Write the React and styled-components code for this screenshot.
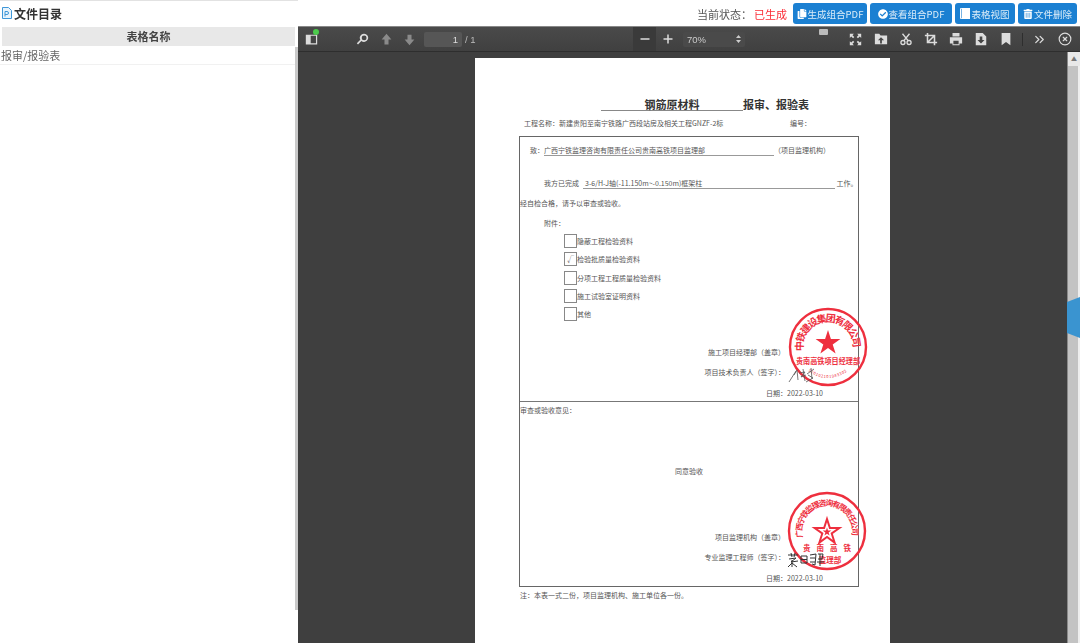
import React from "react";
import styled, { createGlobalStyle } from "styled-components";
import { FaCheckCircle, FaCopy, FaTrashAlt } from "react-icons/fa";
import { ChevronsRight, CircleX } from "lucide-react";

const CJK = `"Noto Sans CJK SC", "Liberation Sans", sans-serif`;

const Global = createGlobalStyle`
  html, body { margin: 0; padding: 0; height: 100%; background: #fff; overflow: hidden; }
  body { font-family: ${CJK}; }
  #root { height: 100%; }
`;

const Page = styled.div`
  display: flex;
  width: 1080px;
  height: 643px;
  overflow: hidden;
  filter: blur(0.3px);
`;

const Sidebar = styled.aside`
  width: 298px;
  flex: none;
  display: flex;
  flex-direction: column;
  border-top: 1px solid #e2e2e2;
  box-sizing: border-box;
`;

const SidebarTitle = styled.div`
  height: 26px;
  flex: none;
  display: flex;
  align-items: center;
  gap: 2px;
  padding: 0 0 2px 2px;
  box-sizing: border-box;
  font-size: 12px;
  font-weight: 700;
  color: #333;
`;

const SidebarBody = styled.div`
  flex: 1;
  display: flex;
`;

const TableWrap = styled.div`
  width: 293px;
  margin-left: 2px;
  flex: none;
`;

const TableHead = styled.div`
  height: 19px;
  background: #e8e8e8;
  text-align: center;
  font-size: 11px;
  line-height: 19px;
  font-weight: 700;
  color: #444;
`;

const TableRow = styled.div`
  height: 19px;
  margin-left: -2px;
  line-height: 19px;
  font-size: 11px;
  color: #666;
  padding-left: 1px;
  border-bottom: 1px solid #f1f1f1;
  box-sizing: border-box;
`;

const SideThumb = styled.div`
  width: 3px;
  height: 563px;
  margin-top: 20px;
  background: #c9c9c9;
`;

const Main = styled.main`
  flex: 1;
  min-width: 0;
  display: flex;
  flex-direction: column;
`;

const TopBar = styled.div`
  height: 26px;
  flex: none;
  display: flex;
  align-items: center;
  justify-content: flex-end;
  padding: 1px 3px 0 0;
  box-sizing: border-box;
`;

const StatusLabel = styled.span`
  font-size: 11px;
  color: #555;
  white-space: nowrap;
`;

const StatusValue = styled.span`
  font-size: 11px;
  color: #fb2c36;
  margin: 0 6px 0 2px;
  white-space: nowrap;
`;

const ActionButton = styled.button`
  height: 21px;
  width: ${(p) => p.$w}px;
  margin-left: ${(p) => (p.$first ? 0 : 3)}px;
  padding: 0;
  border: 0;
  border-radius: 3px;
  background: #1b80d2;
  color: #dcecf8;
  font-family: ${CJK};
  font-size: 9.5px;
  display: flex;
  align-items: center;
  justify-content: center;
  gap: 1px;
  white-space: nowrap;
  svg { color: #fff; }
`;

const Viewer = styled.section`
  flex: 1;
  min-height: 0;
  display: flex;
  flex-direction: column;
  background: #3f3f3f;
`;

const Toolbar = styled.div`
  height: 26px;
  flex: none;
  display: flex;
  align-items: center;
  box-sizing: border-box;
  background: linear-gradient(#4a4a4a, #404040);
  border-top: 1px solid #888;
  border-bottom: 1px solid #2e2e2e;
  color: #d9d9d9;
`;

const Tool = styled.div`
  position: relative;
  width: ${(p) => p.$w || 25}px;
  height: 24px;
  margin-left: ${(p) => p.$ml || 0}px;
  flex: none;
  display: flex;
  align-items: center;
  justify-content: center;
  color: ${(p) => p.$c || "#dcdcdc"};
  background: ${(p) => p.$bg || "transparent"};
`;

const TinyTool = styled(Tool)`
  align-items: flex-start;
  padding-top: 2px;
  box-sizing: border-box;
`;

const Dot = styled.span`
  position: absolute;
  width: 6px;
  height: 6px;
  top: 2px;
  right: 0;
  border-radius: 50%;
  background: #4ccb4c;
`;

const PageInput = styled.div`
  width: 38px;
  height: 15px;
  margin-left: 3px;
  flex: none;
  background: #565656;
  border-radius: 2px;
  font-size: 9.5px;
  line-height: 15px;
  text-align: right;
  padding-right: 4px;
  box-sizing: border-box;
  font-family: "Liberation Sans", sans-serif;
  color: #ddd;
`;

const PageCount = styled.span`
  margin-left: 3px;
  width: 12px;
  flex: none;
  font-size: 9.5px;
  font-family: "Liberation Sans", sans-serif;
  color: #bbb;
  white-space: nowrap;
`;

const ZoomSelect = styled.div`
  width: 62px;
  height: 15px;
  margin-left: 3px;
  flex: none;
  background: #4a4a4a;
  border-radius: 2px;
  display: flex;
  align-items: center;
  justify-content: space-between;
  padding: 0 4px;
  box-sizing: border-box;
  font-size: 9.5px;
  font-family: "Liberation Sans", sans-serif;
  color: #ccc;
`;

const Divider = styled.span`
  width: 1px;
  height: 13px;
  margin-left: 4px;
  flex: none;
  background: #2e2e2e;
`;

const ViewerBody = styled.div`
  position: relative;
  flex: 1;
  min-height: 0;
  display: flex;
`;

const PageArea = styled.div`
  flex: 1;
  min-width: 0;
  display: flex;
  justify-content: center;
  overflow: hidden;
  padding-top: 6px;
`;

const Paper = styled.div`
  width: 415px;
  height: 620px;
  flex: none;
  background: #fff;
  padding-top: 39px;
  box-sizing: border-box;
  color: #555;
  font-size: 7px;
`;

const Title = styled.div`
  display: flex;
  height: 14px;
  margin-left: 126px;
  font-size: 11px;
  font-weight: 700;
  line-height: 14px;
  color: #333;
`;

const TitleBlank = styled.span`
  width: 142px;
  text-align: center;
  border-bottom: 1px solid #888;
  box-sizing: border-box;
`;

const ProjectLine = styled.div`
  display: flex;
  justify-content: space-between;
  height: 10px;
  line-height: 10px;
  margin: 7px 79px 0 49px;
`;

const FormBox = styled.div`
  position: relative;
  width: 340px;
  height: 451px;
  margin: 8px 0 0 44px;
  box-sizing: border-box;
  border: 1px solid #666;
`;

const TopSection = styled.div`
  height: 265px;
  border-bottom: 1px solid #777;
  box-sizing: border-box;
  overflow: hidden;
`;

const Line = styled.div`
  display: flex;
  height: 10px;
  line-height: 10px;
  white-space: nowrap;
  margin-top: ${(p) => p.$mt || 0}px;
  padding-left: ${(p) => p.$pl || 0}px;
  justify-content: ${(p) => (p.$pr !== undefined ? "flex-end" : p.$center ? "center" : "flex-start")};
  padding-right: ${(p) => p.$pr || 0}px;
`;

const Fill = styled.span`
  width: ${(p) => p.$w}px;
  flex: none;
  padding-left: ${(p) => p.$pl || 0}px;
  margin-left: ${(p) => p.$ml || 0}px;
  border-bottom: 1px solid #999;
  box-sizing: border-box;
  height: 11px;
`;

const CheckList = styled.div`
  height: 87px;
  margin: 6px 0 0 44px;
  display: flex;
  flex-direction: column;
  gap: 4.3px;
`;

const CheckRow = styled.div`
  display: flex;
  align-items: center;
  height: 14px;
`;

const CheckBox = styled.span`
  width: 13px;
  height: 14px;
  flex: none;
  box-sizing: border-box;
  border: 1px solid #888;
  display: flex;
  align-items: center;
  justify-content: center;
  font-size: 7px;
`;

const Overlay = styled.div`
  position: absolute;
  left: ${(p) => p.$x}px;
  top: ${(p) => p.$y}px;
  pointer-events: none;
`;

const Note = styled.div`
  margin: 3px 0 0 45px;
  height: 10px;
  line-height: 10px;
`;

const Rail = styled.div`
  width: 13px;
  flex: none;
  display: flex;
  flex-direction: column;
  background: #eee;
  border-left: 1px solid #8a8a8a;
  box-sizing: border-box;
`;

const RailButton = styled.div`
  height: 14px;
  flex: none;
  background: #e8e8e8;
  color: #777;
  font-size: 6px;
  line-height: 14px;
  text-align: center;
`;

const RailThumb = styled.div`
  flex: 1;
  width: 10px;
  background: #c3c3c3;
`;

const Tab = styled.div`
  position: absolute;
  right: 0;
  top: 245px;
  width: 13px;
  height: 41px;
  background: #3a94d0;
  clip-path: polygon(0 5px, 100% 0, 100% 100%, 0 36px);
`;

const Ico = ({ children, s = 14 }) => (
  <svg width={s} height={s} viewBox="0 0 16 16" fill="currentColor">{children}</svg>
);

const DocIcon = () => (
  <svg width="10" height="12" viewBox="0 0 10 12" fill="none" stroke="#3f97d8" strokeWidth="1">
    <path d="M.5.5h6l3 3v8h-9z" fill="#e9f4fc" />
    <path d="M3 9.5V4.5h2a1.3 1.3 0 010 3H3" />
  </svg>
);

const TableBook = () => (
  <svg width="10" height="11" viewBox="0 0 10 11" fill="#fff">
    <path fillRule="evenodd" d="M0 1a1 1 0 011-1h9v11H1a1 1 0 01-1-1zM1 .8v9.400h.6V.8z" />
  </svg>
);

const SideToggle = () => (
  <Ico s={13}>
    <path fillRule="evenodd" d="M1 2h14v12H1zm6 1.500v9h6.500v-9z" />
  </Ico>
);
const Search = () => (
  <Ico s={13}>
    <path fillRule="evenodd" d="M10 1a5 5 0 11-3.400 8.700L2.500 14 1 12.500l4.300-4.100A5 5 0 0110 1zm0 2a3 3 0 100 6 3 3 0 000-6z" />
  </Ico>
);
const ArrowUp = () => (
  <Ico s={13}><path d="M8 1l6 7h-3.500v6h-5V8H2z" /></Ico>
);
const ArrowDown = () => (
  <Ico s={13}><path d="M8 15L2 8h3.500V2h5v6H14z" /></Ico>
);
const Minus = () => (
  <Ico s={12}><rect x="2" y="7" width="12" height="2" /></Ico>
);
const Plus = () => (
  <Ico s={12}><path d="M7 2h2v5h5v2H9v5H7V9H2V7h5z" /></Ico>
);
const Updown = () => (
  <svg width="5" height="8" viewBox="0 0 5 8" fill="#ccc"><path d="M2.500 0L5 3H0zM2.500 8L0 5h5z" /></svg>
);
const Full = () => (
  <Ico s={13}>
    <path d="M1 1h5L4.300 2.700 6.500 5 5 6.500 2.700 4.300 1 6zM15 1v5l-1.700-1.700L11 6.500 9.500 5l2.200-2.300L10 1zM1 15v-5l1.700 1.700L5 9.500 6.500 11l-2.200 2.300L6 15zM15 15h-5l1.700-1.700L9.500 11 11 9.500l2.300 2.200L15 10z" />
  </Ico>
);
const FolderOpen = () => (
  <Ico>
    <path fillRule="evenodd" d="M1 2h5l1.500 2H15v10H1zM8 6L4.500 9.500H7V13h2V9.500h2.500z" />
  </Ico>
);
const Cut = () => (
  <svg width="14" height="14" viewBox="0 0 16 16" fill="none" stroke="currentColor" strokeWidth="1.500">
    <circle cx="4.500" cy="12" r="2.300" />
    <circle cx="11.500" cy="12" r="2.300" />
    <path d="M5.500 10L12 2M10.500 10L4 2" />
  </svg>
);
const CropBox = () => (
  <svg width="14" height="14" viewBox="0 0 16 16" fill="none" stroke="currentColor" strokeWidth="1.800">
    <path d="M4 1v11h11M1 4h11v11M4 12l8-8" />
  </svg>
);
const Printer = () => (
  <Ico>
    <path fillRule="evenodd" d="M4 1h8v4H4zM1 6h14v7h-3v2H4v-2H1zm4 4v4h6v-4z" />
  </Ico>
);
const Save = () => (
  <Ico>
    <path fillRule="evenodd" d="M2 1h8l4 4v10H2zM6.500 5v4H4l4 4 4-4H9.500V5z" />
  </Ico>
);
const Mark = () => (
  <Ico><path d="M3 1h10v14l-5-3.500L3 15z" /></Ico>
);
const Tiny = () => (
  <svg width="9" height="6" viewBox="0 0 9 6" fill="#bbb"><rect width="9" height="6" rx="1" /></svg>
);

const StarShape = ({ cx, cy, r, fill, stroke, w = 1.4 }) => {
  const pts = [];
  for (let i = 0; i < 10; i += 1) {
    const a = (-90 + i * 36) * (Math.PI / 180);
    const rr = i % 2 ? r * 0.38 : r;
    pts.push(`${(cx + rr * Math.cos(a)).toFixed(1)},${(cy + rr * Math.sin(a)).toFixed(1)}`);
  }
  return <polygon points={pts.join(" ")} fill={fill} stroke={stroke} strokeWidth={w} />;
};

const RED = "#ee2f3e";

const StampOne = () => (
  <svg width="80" height="80" viewBox="0 0 80 80" fill={RED} fontFamily={CJK} fontWeight="700">
    <defs>
      <path id="arcA" d="M15.400 44.300 A25 25 0 1 1 64.600 44.300" fill="none" />
      <path id="arcB" d="M20.400 64 A31 31 0 0 0 59.600 64" fill="none" />
    </defs>
    <circle cx="40" cy="40" r="38" fill="none" stroke={RED} strokeWidth="2.400" />
    <text fontSize="10"><textPath href="#arcA" textLength="84">中铁建设集团有限公司</textPath></text>
    <StarShape cx={40} cy={36} r={13} fill={RED} />
    <text x="40" y="57" fontSize="7.500" textAnchor="middle" textLength="64" lengthAdjust="spacingAndGlyphs">贵南高铁项目经理部</text>
    <text fontSize="4" fontWeight="400"><textPath href="#arcB" textLength="44">5201021019833020</textPath></text>
  </svg>
);

const StampTwo = () => (
  <svg width="80" height="80" viewBox="0 0 80 80" fill={RED} fontFamily={CJK} fontWeight="700">
    <defs>
      <path id="arcC" d="M15.900 46.500 A25 25 0 1 1 64.100 46.500" fill="none" />
    </defs>
    <circle cx="40" cy="40" r="38" fill="none" stroke={RED} strokeWidth="2.400" />
    <text fontSize="8"><textPath href="#arcC" textLength="90">广西宁铁监理咨询有限责任公司</textPath></text>
    <StarShape cx={40} cy={41} r={13} fill="none" stroke={RED} w={2} />
    <StarShape cx={40} cy={41} r={4.500} fill={RED} />
    <text x="40" y="60" fontSize="7.500" textAnchor="middle" textLength="48">贵南高铁</text>
    <text x="43" y="72" fontSize="7.500" textAnchor="middle">监理部</text>
  </svg>
);

const SignOne = () => (
  <svg width="30" height="16" viewBox="0 0 30 16" fill="none" stroke="#555" strokeWidth="0.800">
    <path d="M1 15L8 4M6 8l3-5 1 10M11 6l6-1-4 5 5-2M15 2l2 12M19 7l7-5M20 8l5 3-7 4M23 1l1 11" />
  </svg>
);

const SignTwo = () => (
  <svg width="38" height="16" viewBox="0 0 38 16" fill="none" stroke="#333" strokeWidth="1">
    <path d="M1 3h10M4 1l1 4M8 1L7 5M2 7l7-1-5 4 7-1M1 15l4-4 5 4M5 8v7M14 4h6v7h-6zM14 7.500h6M23 3l6-1-1 11-3-1M23 6h5M23 10h5M31 2h5l-1 5h-4M33 2v12M30 10h7" />
  </svg>
);

const App = () => (
  <Page>
    <Global />
    <Sidebar>
      <SidebarTitle>
        <DocIcon />
        文件目录
      </SidebarTitle>
      <SidebarBody>
        <TableWrap>
          <TableHead>表格名称</TableHead>
          <TableRow>报审/报验表</TableRow>
        </TableWrap>
        <SideThumb />
      </SidebarBody>
    </Sidebar>
    <Main>
      <TopBar>
        <StatusLabel>当前状态：</StatusLabel>
        <StatusValue>已生成</StatusValue>
        <ActionButton $w={74} $first><FaCopy size={10} />生成组合PDF</ActionButton>
        <ActionButton $w={82}><FaCheckCircle size={10} />查看组合PDF</ActionButton>
        <ActionButton $w={60}><TableBook />表格视图</ActionButton>
        <ActionButton $w={59}><FaTrashAlt size={10} />文件删除</ActionButton>
      </TopBar>
      <Viewer>
        <Toolbar>
          <Tool $w={16} $ml={5}><SideToggle /><Dot /></Tool>
          <Tool $ml={31}><Search /></Tool>
          <Tool $w={22} $c="#8a8a8a"><ArrowUp /></Tool>
          <Tool $w={24} $c="#8a8a8a"><ArrowDown /></Tool>
          <PageInput>1</PageInput>
          <PageCount>/ 1</PageCount>
          <Tool $w={23} $ml={156} $bg="#3a3a3a"><Minus /></Tool>
          <Tool $w={24}><Plus /></Tool>
          <ZoomSelect>70%<Updown /></ZoomSelect>
          <TinyTool $w={12} $ml={72} $c="#bbb"><Tiny /></TinyTool>
          <Tool $ml={14}><Full /></Tool>
          <Tool><FolderOpen /></Tool>
          <Tool><Cut /></Tool>
          <Tool><CropBox /></Tool>
          <Tool><Printer /></Tool>
          <Tool><Save /></Tool>
          <Tool><Mark /></Tool>
          <Divider />
          <Tool $ml={4}><ChevronsRight size={15} /></Tool>
          <Tool><CircleX size={14} /></Tool>
        </Toolbar>
        <ViewerBody>
          <PageArea>
            <Paper>
              <Title>
                <TitleBlank>钢筋原材料</TitleBlank>
                <span>报审、报验表</span>
              </Title>
              <ProjectLine>
                <span>工程名称：新建贵阳至南宁铁路广西段站房及相关工程GNZF-2标</span>
                <span>编号：</span>
              </ProjectLine>
              <FormBox>
                <TopSection>
                  <Line $mt={8} $pl={10}>
                    致：
                    <Fill $w={230}>广西宁铁监理咨询有限责任公司贵南高铁项目监理部</Fill>
                    <span>（项目监理机构）</span>
                  </Line>
                  <Line $mt={23} $pl={24}>
                    我方已完成
                    <Fill $w={252} $ml={4} $pl={2}>3-6/H-J轴(-11.150m~-0.150m)框架柱</Fill>
                    <span>&nbsp;工作。</span>
                  </Line>
                  <Line $mt={10}>经自检合格，请予以审查或验收。</Line>
                  <Line $mt={10} $pl={24}>附件：</Line>
                  <CheckList>
                    <CheckRow><CheckBox />隐蔽工程检验资料</CheckRow>
                    <CheckRow><CheckBox>√</CheckBox>检验批质量检验资料</CheckRow>
                    <CheckRow><CheckBox />分项工程工程质量检验资料</CheckRow>
                    <CheckRow><CheckBox />施工试验室证明资料</CheckRow>
                    <CheckRow><CheckBox />其他</CheckRow>
                  </CheckList>
                  <Line $mt={26} $pr={73}>施工项目经理部（盖章）</Line>
                  <Line $mt={10} $pr={73}>项目技术负责人（签字）：</Line>
                  <Line $mt={11} $pr={35}>日期：2022-03-10</Line>
                </TopSection>
                <Line $mt={3}>审查或验收意见：</Line>
                <Line $mt={51} $center>同意验收</Line>
                <Line $mt={56} $pr={73}>项目监理机构（盖章）</Line>
                <Line $mt={10} $pr={73}>专业监理工程师（签字）：</Line>
                <Line $mt={11} $pr={35}>日期：2022-03-10</Line>
                <Overlay $x={268} $y={170}><StampOne /></Overlay>
                <Overlay $x={267} $y={354}><StampTwo /></Overlay>
                <Overlay $x={268} $y={230}><SignOne /></Overlay>
                <Overlay $x={267} $y={415}><SignTwo /></Overlay>
              </FormBox>
              <Note>注：本表一式二份，项目监理机构、施工单位各一份。</Note>
            </Paper>
          </PageArea>
          <Rail>
            <RailButton>▲</RailButton>
            <RailThumb />
          </Rail>
          <Tab />
        </ViewerBody>
      </Viewer>
    </Main>
  </Page>
);

export default App;
